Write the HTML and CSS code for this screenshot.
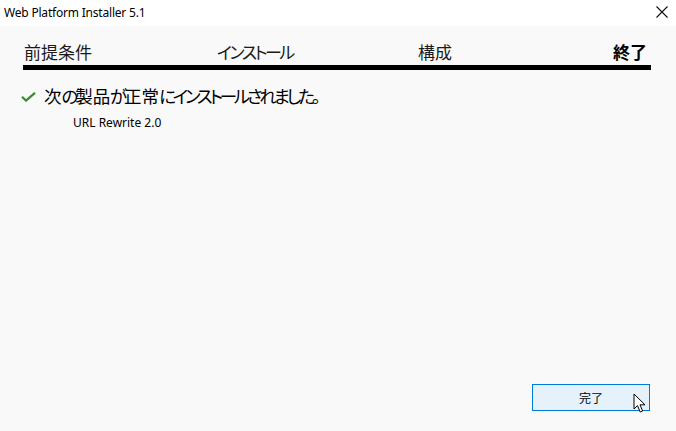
FILE: index.html
```html
<!DOCTYPE html>
<html lang="ja">
<head>
<meta charset="utf-8">
<link rel="stylesheet" href="styles.css">
</head>
<body>
<div class="window">
  <div class="titlebar">
    <span class="title">Web Platform Installer 5.1</span>
    <svg class="close" width="12" height="12" viewBox="0 0 12 12"><path d="M0.5 0.5L11.5 11.5M11.5 0.5L0.5 11.5" stroke="#111" stroke-width="1.1" fill="none"/></svg>
  </div>
  <div class="content">
    <div class="steps">
      <span class="step">前提条件</span>
      <span class="step kana">インストール</span>
      <span class="step">構成</span>
      <span class="step current">終了</span>
    </div>
    <div class="bar"></div>
    <div class="result">
      <svg class="check" width="15" height="10" viewBox="0 0 15 10"><path d="M1 4.8L5 8.6L14 0.8" stroke="#3a8a2e" stroke-width="2.2" fill="none"/></svg>
      <span class="heading">次<span class="k">の</span>製品<span class="k">が</span>正常<span class="k">にインストールされました。</span></span>
    </div>
    <div class="product">URL Rewrite 2.0</div>
    <div class="spacer"></div>
    <div class="footer">
      <button class="btn">完了</button>
    </div>
    <svg class="cursor" width="15" height="21" viewBox="0 0 15 21"><path d="M1 1L1 16L4.5 12.6L7.2 19L9.6 18L7 11.8L12 11.8Z" fill="#fff" stroke="#000" stroke-width="1" stroke-linejoin="miter"/></svg>
  </div>
</div>
</body>
</html>
```
FILE: styles.css
```css
html, body {
  margin: 0;
  padding: 0;
}
body {
  width: 676px;
  height: 431px;
  overflow: hidden;
  background: #f9f9f9;
  font-family: "Noto Sans", "Noto Sans CJK JP", sans-serif;
}
.window {
  display: flex;
  flex-direction: column;
  height: 431px;
}
.titlebar {
  height: 26px;
  background: #ffffff;
  display: flex;
  align-items: center;
  justify-content: space-between;
  padding: 0 8px 0 4px;
}
.title {
  font-size: 12px;
  color: #000;
  letter-spacing: -0.2px;
  margin-top: -2px;
}
.close {
  margin-top: -3px;
}
.content {
  flex: 1;
  position: relative;
  display: flex;
  flex-direction: column;
  padding: 0 25px 0 23px;
}
.steps {
  display: grid;
  grid-template-columns: 193px 201px 1fr auto;
  padding: 13px 4px 0 1px;
  height: 26px;
  font-family: "Noto Sans CJK JP", sans-serif;
  font-size: 17px;
  line-height: 26px;
  color: #1a1a1a;
}
.step.kana {
  font-feature-settings: "palt";
  letter-spacing: -2.5px;
}
.step.current {
  font-weight: 700;
  color: #000;
}
.bar {
  height: 5px;
  background: #000;
}
.result {
  display: flex;
  align-items: center;
  margin-top: 14px;
  height: 24px;
}
.check {
  margin-left: -2px;
  margin-right: 8px;
  margin-top: 2px;
}
.heading {
  font-family: "Noto Sans CJK JP", sans-serif;
  font-size: 17.5px;
  color: #000;
  line-height: 24px;
}
.heading .k {
  font-feature-settings: "palt";
  letter-spacing: -3.2px;
}
.product {
  margin-top: 7px;
  margin-left: 50px;
  font-size: 12px;
  color: #000;
  line-height: 16px;
}
.spacer {
  flex: 1;
}
.footer {
  display: flex;
  justify-content: flex-end;
  margin-bottom: 20px;
}
.btn {
  width: 118px;
  height: 27px;
  margin-right: 1px;
  border: 1px solid #0078d7;
  background: #e5f1fb;
  font-family: "Noto Sans CJK JP", sans-serif;
  font-size: 12px;
  color: #000;
  padding: 0;
}
.cursor {
  position: absolute;
  left: 633px;
  top: 367px;
}
```
